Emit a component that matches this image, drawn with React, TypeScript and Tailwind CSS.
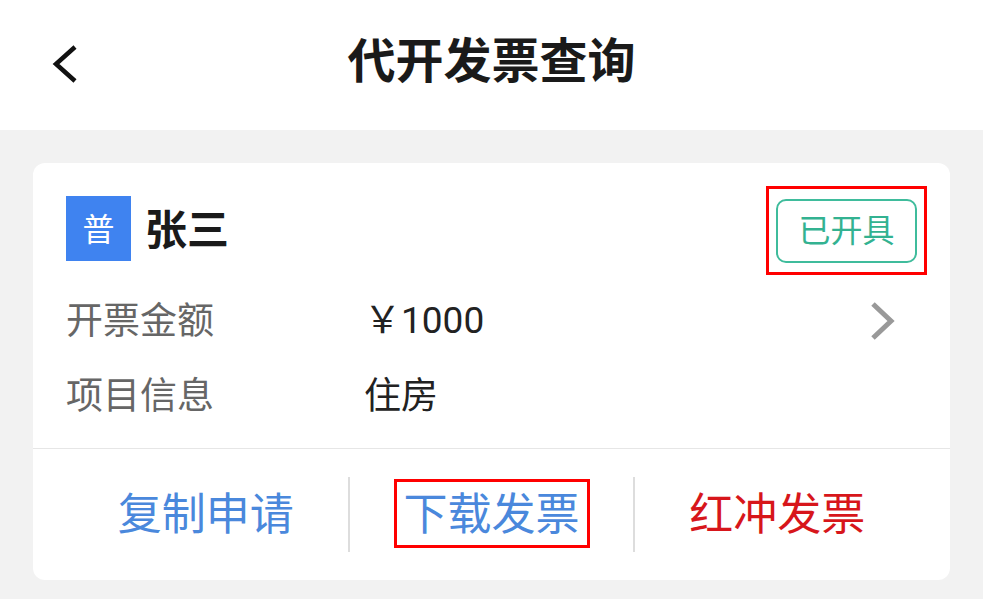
import React from "react";

const font = { fontFamily: '"Noto Sans CJK SC", "Noto Sans", sans-serif' };

export default function App() {
  return (
    <div
      className="w-[983px] h-[599px] bg-[#f2f2f2] overflow-hidden"
      style={font}
    >
      {/* Header */}
      <div className="h-[130px] bg-white flex items-center relative">
        <div className="w-[130px] h-full flex items-center pl-[50px]">
          <svg width="30" height="40" viewBox="0 0 30 40" className="-mt-[2px]">
            <path
              d="M25 3 L6 20 L25 37"
              fill="none"
              stroke="#111"
              strokeWidth="4.5"
              strokeLinecap="butt"
              strokeLinejoin="miter"
            />
          </svg>
        </div>
        <div className="absolute inset-0 flex items-center justify-center pointer-events-none">
          <span className="text-[48px] font-bold text-[#1a1a1a] leading-none -translate-y-[8px]">
            代开发票查询
          </span>
        </div>
      </div>

      {/* Card */}
      <div className="mx-[33px] mt-[33px] bg-white rounded-[12px] w-[917px]">
        <div className="px-[33px] pt-[33px]">
          <div className="h-[65px] flex items-center">
            <div className="w-[65px] h-[65px] bg-[#3f83f0] flex items-center justify-center text-white text-[32px] leading-none">
              <span className="-translate-y-[2px]">普</span>
            </div>
            <span className="ml-[14px] text-[42px] font-bold text-[#1a1a1a] leading-none -translate-y-[2px]">
              张三
            </span>
            <div className="ml-auto mr-[-10px] mt-[4px] border-[3px] border-[#ff0000] pt-[10px] pb-[9px] px-[7px]">
              <div className="w-[141px] h-[64px] border-2 border-[#3fbc9c] rounded-[10px] flex items-center justify-center text-[32px] text-[#33b291] leading-none">
                <span className="-translate-y-[3px]">已开具</span>
              </div>
            </div>
          </div>

          <div className="mt-[23px] h-[75px] flex items-center">
            <span className="w-[298px] text-[37px] text-[#666666] leading-none -translate-y-[3px]">
              开票金额
            </span>
            <span className="text-[37px] text-[#222222] leading-none -translate-y-[3px]">
              ￥<span style={{ fontFamily: 'Roboto, "Noto Sans", sans-serif' }}>1000</span>
            </span>
            <svg width="30" height="40" viewBox="0 0 30 40" className="ml-auto mr-[20px] -translate-y-[1px]">
              <path
                d="M6 3 L24 20 L6 37"
                fill="none"
                stroke="#999999"
                strokeWidth="5"
              />
            </svg>
          </div>
          <div className="h-[75px] flex items-center">
            <span className="w-[298px] text-[37px] text-[#666666] leading-none -translate-y-[3px]">
              项目信息
            </span>
            <span className="text-[37px] text-[#222222] leading-none -translate-y-[3px]">
              住房
            </span>
          </div>
        </div>

        <div className="mt-[14px] h-[1px] bg-[#e6e6e6]" />

        <div className="h-[131px] px-[31px] flex items-center">
          <div className="flex-1 flex items-center justify-center text-[44px] text-[#4a88dc] leading-none">
            <span className="-translate-y-[4px]">复制申请</span>
          </div>
          <div className="w-[2px] h-[75px] bg-[#dddddd]" />
          <div className="flex-1 flex items-center justify-center">
            <div className="border-[3px] border-[#ff0000] h-[69px] px-[7px] flex items-center text-[44px] text-[#4a88dc] leading-none -translate-y-[1px]">
              <span className="-translate-y-[3px]">下载发票</span>
            </div>
          </div>
          <div className="w-[2px] h-[75px] bg-[#dddddd]" />
          <div className="flex-1 flex items-center justify-center text-[44px] text-[#d7161b] leading-none">
            <span className="-translate-y-[4px]">红冲发票</span>
          </div>
        </div>
      </div>
    </div>
  );
}
